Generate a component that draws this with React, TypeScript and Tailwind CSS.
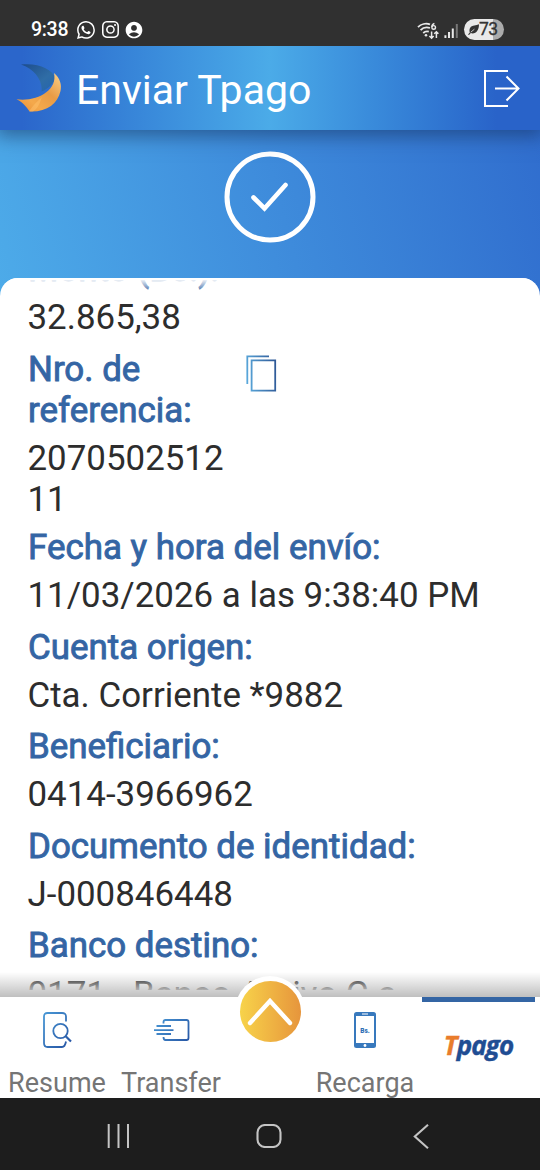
import React from 'react';
import { BsInstagram, BsWhatsapp } from 'react-icons/bs';
import { MdAccountCircle } from 'react-icons/md';

interface DetailItem {
  label: string;
  value: string;
  copyable?: boolean;
}

const details: DetailItem[] = [
  { label: 'Monto (Bs.):', value: '32.865,38' },
  { label: 'Nro. de referencia:', value: '207050251211', copyable: true },
  { label: 'Fecha y hora del envío:', value: '11/03/2026 a las 9:38:40 PM' },
  { label: 'Cuenta origen:', value: 'Cta. Corriente *9882' },
  { label: 'Beneficiario:', value: '0414-3966962' },
  { label: 'Documento de identidad:', value: 'J-000846448' },
  { label: 'Banco destino:', value: '0171 - Banco Activo C.a' },
];

const SignalIcons: React.FC = () => (
  <svg className="w-[42px] h-[20px]" viewBox="0 0 42 20" fill="none" stroke="#e8e8e8" strokeWidth="1.8">
    {/* wifi 6 with transfer arrows */}
    <path d="M1 7.2C4 4 9 3 13 4.4M3.6 10.2C6 7.6 9.4 6.8 13 8M6.2 13C8 11.3 10 11 11.8 11.6" />
    <circle cx="9" cy="15.2" r="1.3" fill="#e8e8e8" stroke="none" />
    <path d="M17.4 3.4C15.4 4.2 14.8 5.8 14.9 7" strokeWidth="1.5" />
    <circle cx="16.7" cy="7.4" r="1.8" strokeWidth="1.4" />
    <path d="M14.6 11.4V18M12.4 16L14.6 18.2L16.6 16M19.4 18V12M17.2 13.8L19.4 11.8L21.4 13.8" strokeWidth="1.5" />
    {/* mobile signal */}
    <path d="M28.4 15.2V18M32 12V18M35.8 8.4V18" strokeWidth="2" />
    <path d="M39.8 4V18" stroke="#777" strokeWidth="2" />
  </svg>
);

const StatusBar: React.FC = () => (
  <div className="z-20 h-[46px] shrink-0 bg-[#303030] flex items-center justify-between pl-[31px] pr-9 pt-[13px] text-white">
    <div className="flex items-center">
      <span className="w-[46px] text-[19.5px] leading-none font-medium tracking-[-0.3px]">9:38</span>
      <BsWhatsapp className="w-[18px] h-[18px]" />
      <BsInstagram className="w-[17px] h-[17px] ml-[7px]" />
      <MdAccountCircle className="w-[20px] h-[20px] ml-[5px]" />
    </div>
    <div className="flex items-center">
      <SignalIcons />
      <div className="ml-[5px] w-10 h-[21px] rounded-full bg-linear-to-r from-[#e9e9e9] from-72% to-[#ababab] to-72% flex items-center text-[#333]">
        <svg className="ml-1 w-[11px] h-[11px]" viewBox="0 0 11 11">
          <path d="M0 10.6L1.8 8.6C.6 5 2.6 1.6 6.4 1.5C8 1.4 9.6 1.1 11 .3C11 5.6 8.6 9.5 4.6 9.5C4 9.5 3.3 9.3 2.8 9.1L1 10.9Z" fill="#333" />
          <path d="M2.8 8.2L6.4 5.2" stroke="#e9e9e9" strokeWidth=".8" />
        </svg>
        <span className="text-[17.5px] leading-none tracking-[-0.6px] [-webkit-text-stroke:0.3px_#333]">73</span>
      </div>
    </div>
  </div>
);

const BankLogo: React.FC = () => (
  <svg className="w-[46px] h-[48px]" viewBox="0 0 46 48">
    <defs>
      <linearGradient id="logoBlue" x1="0" y1="0" x2="1" y2="1">
        <stop offset="0" stopColor="#1d4c8c" />
        <stop offset=".6" stopColor="#2f6da6" />
        <stop offset="1" stopColor="#2464ae" />
      </linearGradient>
      <linearGradient id="logoOrange" x1="1" y1="0" x2="0" y2="1">
        <stop offset="0" stopColor="#fbd28a" />
        <stop offset=".4" stopColor="#e99b45" />
        <stop offset=".7" stopColor="#f4a94c" />
        <stop offset="1" stopColor="#e78a32" />
      </linearGradient>
    </defs>
    <path d="M5 .5C22-1.500 36 5 39.500 14C38 19 32 25 25.500 27.500C27 16 18 5 5 .5Z" fill="url(#logoBlue)" />
    <path d="M38 9C44 14 46 21 44.500 27C41.500 40 31 48 14 47.500C11 45 9 39 .5 35.200C20 38 42 27 38 9Z" fill="url(#logoOrange)" />
    <path d="M13 47.500C18 40 21 38 26 33C23 41 22 44 17 47.500Z" fill="#ffc26b" opacity=".5" />
  </svg>
);

const Header: React.FC = () => (
  <header className="h-[84px] shrink-0 flex items-center pl-4 pr-5 bg-linear-to-r from-[#2b66cb] from-4% via-[#4babe8] to-[#2963c9] to-92% shadow-[0_2px_18px_4px_rgba(20,45,90,0.55)] z-10">
    <BankLogo />
    <h1 className="ml-[14px] mt-[5px] text-[41px] leading-none text-white">Enviar Tpago</h1>
    <svg className="ml-auto w-[37px] h-[37px]" viewBox="0 0 37 37" fill="none" stroke="white" strokeWidth="2">
      <path d="M25 1H2V36H25M12 18.5H35M23.5 6.5L35.5 18.5L23.5 30.5" />
    </svg>
  </header>
);

const CopyIcon: React.FC = () => (
  <svg className="w-[31px] h-[37px]" viewBox="0 0 31 37" fill="none" strokeWidth="1.8">
    <defs>
      <linearGradient id="copyStroke" gradientUnits="userSpaceOnUse" x1="0" y1="20" x2="31" y2="16">
        <stop offset="0" stopColor="#5aa9dc" />
        <stop offset="1" stopColor="#2e5795" />
      </linearGradient>
    </defs>
    <path d="M1.3 29V1.3H23" stroke="url(#copyStroke)" />
    <path d="M5.6 5.4H29.2V35.6H5.6Z" stroke="url(#copyStroke)" />
  </svg>
);

const DetailRow: React.FC<{ item: DetailItem }> = ({ item }) => (
  <div className={`group text-[34.9px] leading-[41px] ${item.copyable ? 'mb-[7.5px]' : 'mb-[10.5px]'}`}>
    <div className="flex mb-[7px] group-last:mb-[8px]">
      <div className={`text-[#3465a4] [-webkit-text-stroke:0.9px_#3465a4] ${item.copyable ? 'w-[218px] pr-8' : 'whitespace-nowrap'}`}>
        {item.label}
      </div>
      {item.copyable && (
        <button className="self-start mt-[6.5px]">
          <CopyIcon />
        </button>
      )}
    </div>
    <div className={`-ml-[0.5px] text-[#2d2d2d] ${item.copyable ? 'w-[200px] break-all' : 'whitespace-nowrap'}`}>{item.value}</div>
  </div>
);

const NavItem: React.FC<{ label: string; className: string; children: React.ReactNode }> = ({ label, className, children }) => (
  <button className={`h-full flex flex-col items-center pt-[14px] ${className}`}>
    <span className="h-[38px] shrink-0 flex items-center">{children}</span>
    <span className="mt-[20px] text-[27px] leading-[29px] text-[#757575]">{label}</span>
  </button>
);

const BottomNav: React.FC = () => (
  <nav className="relative h-[101px] shrink-0 bg-white flex z-10">
    <svg className="absolute w-0 h-0">
      <defs>
        <linearGradient id="navStroke" gradientUnits="userSpaceOnUse" x1="0" y1="0" x2="36" y2="30">
          <stop offset="0" stopColor="#4a9bd8" />
          <stop offset="1" stopColor="#2450a0" />
        </linearGradient>
      </defs>
    </svg>
    <NavItem label="Resume" className="w-[114px]">
      <svg className="w-[30px] h-[38px]" viewBox="0 0 30 38" fill="none" stroke="url(#navStroke)" strokeWidth="1.8">
        <path d="M24 10.500V5.500Q24 2 20 2H5.500Q2 2 2 5.500V32Q2 36 5.500 36H20Q23 36 24 30.500" />
        <circle cx="18.500" cy="20" r="7.2" />
        <path d="M23.7 25.200L29 30.500" strokeWidth="2.2" />
      </svg>
    </NavItem>
    <NavItem label="Transfer" className="w-[114px]">
      <svg className="w-[37px] h-[24px]" viewBox="0 0 37 24" fill="none" stroke="url(#navStroke)" strokeWidth="1.8">
        <path d="M10.5 5.5V4Q10.5 2 12.5 2H33.5Q35.5 2 35.5 4V20Q35.5 22 33.5 22H12.5Q10.5 22 10.5 19M3.500 8H18M1 12.1H20.5M3.500 16H18" />
      </svg>
    </NavItem>
    <div className="w-[82px]">
      <button className="absolute left-[235px] top-[-21px] w-[70px] h-[70px] rounded-full bg-white flex items-center justify-center">
        <span className="w-[61px] h-[61px] rounded-full bg-linear-to-r from-[#f7d34a] to-[#e6953c] flex items-center justify-center">
          <svg className="w-[46px] h-[30px]" viewBox="0 0 46 30" fill="none" stroke="white" strokeWidth="4.4" strokeLinecap="round">
            <path d="M3 27L23 5L43 27" />
          </svg>
        </span>
      </button>
    </div>
    <NavItem label="Recarga" className="w-[110px]">
      <svg className="w-[22px] h-[36px]" viewBox="0 0 22 36">
        <rect width="22" height="36" rx="2.5" fill="#3879bd" />
        <rect x="2" y="4" width="18" height="27" fill="white" />
        <path d="M8 2H14" stroke="white" />
        <circle cx="11" cy="33.500" r="1.4" fill="white" />
        <text x="11" y="21" textAnchor="middle" fontSize="6.5" fontWeight="900" fill="#2f6fb5">Bs.</text>
      </svg>
    </NavItem>
    <button className="ml-0.5 w-[113px] border-t-[5px] border-[#3465a4] flex justify-center">
      <span className="mt-[25px] text-[26px] leading-9 font-['Open_Sans',sans-serif] font-bold italic tracking-[-0.9px] text-[#1f4d93] [-webkit-text-stroke:0.4px]">
        <span className="text-[#e97c2c]">T</span>pago
      </span>
    </button>
  </nav>
);

const SystemBar: React.FC = () => (
  <div className="relative z-20 h-[72px] shrink-0 bg-[#1d1d1d] flex items-center pt-1 pl-[107px] text-[#c4c4c4]">
    <svg className="w-[23px] h-[24px]" viewBox="0 0 23 24" stroke="currentColor" strokeWidth="2">
      <path d="M1.700 0V24M11.500 0V24M21 0V24" />
    </svg>
    <svg className="ml-[126px] w-[26px] h-[24px]" viewBox="0 0 26 24" fill="none" stroke="currentColor" strokeWidth="2.1">
      <rect x="1.500" y="1" width="23" height="22" rx="7.5" />
    </svg>
    <svg className="ml-[131px] w-[16px] h-[25px]" viewBox="0 0 16 25" fill="none" stroke="currentColor" strokeWidth="2.1">
      <path d="M15 .8L1.800 12.500L15 24.200" />
    </svg>
  </div>
);

const App: React.FC = () => {
  return (
    <div className="w-[540px] h-[1170px] overflow-hidden flex flex-col bg-white font-[Roboto,sans-serif]">
      <StatusBar />
      <Header />
      <main className="flex-1 min-h-0 flex flex-col bg-[linear-gradient(75deg,#4dabe9_0px,#2f6bcd_590px)] bg-[length:100%_170px] bg-no-repeat">
        <div className="h-[148px] shrink-0 flex justify-center pt-[20.5px]">
          <svg className="w-[92px] h-[92px]" viewBox="0 0 92 92" fill="none" stroke="white" strokeLinecap="round">
            <circle cx="46" cy="46" r="43" strokeWidth="5" />
            <path d="M29.500 46.500L40.500 57.500L61.500 34" strokeWidth="4.600" />
          </svg>
        </div>
        <section className="relative flex-1 min-h-0 bg-white rounded-t-[18px] overflow-hidden pb-[7px] pt-[2px]">
          <div className="h-full overflow-hidden pl-7">
            <div className="mt-[-31px]">
              {details.map((item) => (
                <DetailRow key={item.label} item={item} />
              ))}
            </div>
          </div>
          {/* scroll fades */}
          <div className="absolute top-0 inset-x-0 h-[14px] bg-linear-to-b from-white/90 from-15% to-transparent" />
          <div className="absolute bottom-[7px] inset-x-0 h-[14px] bg-linear-to-t from-white/80 to-transparent" />
          <div className="absolute bottom-0 inset-x-0 h-[25px] bg-linear-to-t from-black/25 to-transparent" />
        </section>
      </main>
      <BottomNav />
      <SystemBar />
    </div>
  );
};

export default App;
